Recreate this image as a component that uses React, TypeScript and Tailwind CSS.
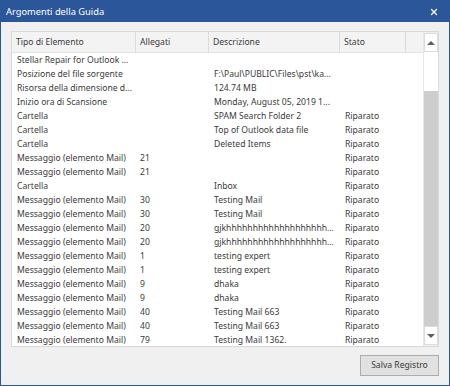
import { X } from "lucide-react";

type Row = { tipo: string; allegati: string; descrizione: string; stato: string };

const rows: Row[] = [
  { tipo: "Stellar Repair for Outlook ...", allegati: "", descrizione: "", stato: "" },
  { tipo: "Posizione del file sorgente", allegati: "", descrizione: "F:\\Paul\\PUBLIC\\Files\\pst\\ka...", stato: "" },
  { tipo: "Risorsa della dimensione d...", allegati: "", descrizione: "124.74 MB", stato: "" },
  { tipo: "Inizio ora di Scansione", allegati: "", descrizione: "Monday, August 05, 2019 1...", stato: "" },
  { tipo: "Cartella", allegati: "", descrizione: "SPAM Search Folder 2", stato: "Riparato" },
  { tipo: "Cartella", allegati: "", descrizione: "Top of Outlook data file", stato: "Riparato" },
  { tipo: "Cartella", allegati: "", descrizione: "Deleted Items", stato: "Riparato" },
  { tipo: "Messaggio (elemento Mail)", allegati: "21", descrizione: "", stato: "Riparato" },
  { tipo: "Messaggio (elemento Mail)", allegati: "21", descrizione: "", stato: "Riparato" },
  { tipo: "Cartella", allegati: "", descrizione: "Inbox", stato: "Riparato" },
  { tipo: "Messaggio (elemento Mail)", allegati: "30", descrizione: "Testing Mail", stato: "Riparato" },
  { tipo: "Messaggio (elemento Mail)", allegati: "30", descrizione: "Testing Mail", stato: "Riparato" },
  { tipo: "Messaggio (elemento Mail)", allegati: "20", descrizione: "gjkhhhhhhhhhhhhhhhhhhh...", stato: "Riparato" },
  { tipo: "Messaggio (elemento Mail)", allegati: "20", descrizione: "gjkhhhhhhhhhhhhhhhhhhh...", stato: "Riparato" },
  { tipo: "Messaggio (elemento Mail)", allegati: "1", descrizione: "testing expert", stato: "Riparato" },
  { tipo: "Messaggio (elemento Mail)", allegati: "1", descrizione: "testing expert", stato: "Riparato" },
  { tipo: "Messaggio (elemento Mail)", allegati: "9", descrizione: "dhaka", stato: "Riparato" },
  { tipo: "Messaggio (elemento Mail)", allegati: "9", descrizione: "dhaka", stato: "Riparato" },
  { tipo: "Messaggio (elemento Mail)", allegati: "40", descrizione: "Testing Mail 663", stato: "Riparato" },
  { tipo: "Messaggio (elemento Mail)", allegati: "40", descrizione: "Testing Mail 663", stato: "Riparato" },
  { tipo: "Messaggio (elemento Mail)", allegati: "79", descrizione: "Testing Mail 1362.", stato: "Riparato" },
];

const headers = [
  { label: "Tipo di Elemento", w: "w-[124px]" },
  { label: "Allegati", w: "w-[73px]" },
  { label: "Descrizione", w: "w-[131px]" },
  { label: "Stato", w: "w-[66px]" },
];

export default function App() {
  return (
    <div className="w-[450px] h-[386px] flex flex-col border border-[#2b579a] bg-[#f0f0f0] text-[8.6px] text-[#3a3a3a] font-['Noto_Sans',sans-serif] overflow-hidden">
      {/* title bar */}
      <div className="h-[21px] bg-[#2b579a] flex items-center justify-between pl-[5px] pr-[10px] shrink-0">
        <span className="text-white text-[9.3px]">Argomenti della Guida</span>
        <X className="w-[10px] h-[10px] text-white" strokeWidth={3} />
      </div>

      <div className="flex-1 flex flex-col px-[10px] pt-[9px]">
        {/* list view */}
        <div className="h-[316px] flex border border-[#d9d9d9] bg-white">
          <div className="flex-1 flex flex-col">
            <div className="h-[21px] flex bg-[#f3f3f3] border-b border-[#e3e3e3] shrink-0">
              {headers.map((h) => (
                <div key={h.label} className={`${h.w} flex items-center pl-[4px] border-r border-[#dcdcdc] shrink-0`}>
                  {h.label}
                </div>
              ))}
              <div className="flex-1" />
            </div>
            {rows.map((r, i) => (
              <div key={i} className="h-[14px] flex items-center leading-[14px] whitespace-nowrap">
                <div className="w-[124px] pl-[5px] shrink-0">{r.tipo}</div>
                <div className="w-[73px] pl-[4px] shrink-0">{r.allegati}</div>
                <div className="w-[131px] pl-[5px] shrink-0">{r.descrizione}</div>
                <div className="w-[66px] pl-[5px] shrink-0">{r.stato}</div>
              </div>
            ))}
          </div>

          {/* scrollbar */}
          <div className="w-[15px] flex flex-col bg-[#f0f0f0] border-l border-[#e6e6e6] shrink-0">
            <div className="h-[19px] flex items-center justify-center bg-white border border-[#dcdcdc] mt-[1px] shrink-0">
              <div className="w-0 h-0 border-l-[4px] border-r-[4px] border-b-[4px] border-l-transparent border-r-transparent border-b-[#606060]" />
            </div>
            <div className="h-[39px] bg-white shrink-0" />
            <div className="flex-1 bg-[#cdcdcd]" />
            <div className="h-[19px] flex items-center justify-center bg-white border border-[#dcdcdc] mb-[1px] shrink-0">
              <div className="w-0 h-0 border-l-[4px] border-r-[4px] border-t-[4px] border-l-transparent border-r-transparent border-t-[#606060]" />
            </div>
          </div>
        </div>

        <div className="flex justify-end mt-[8px]">
          <button className="w-[79px] h-[21px] bg-[#e1e1e1] border border-[#adadad] text-[8.6px] text-[#3a3a3a]">
            Salva Registro
          </button>
        </div>
      </div>
    </div>
  );
}
